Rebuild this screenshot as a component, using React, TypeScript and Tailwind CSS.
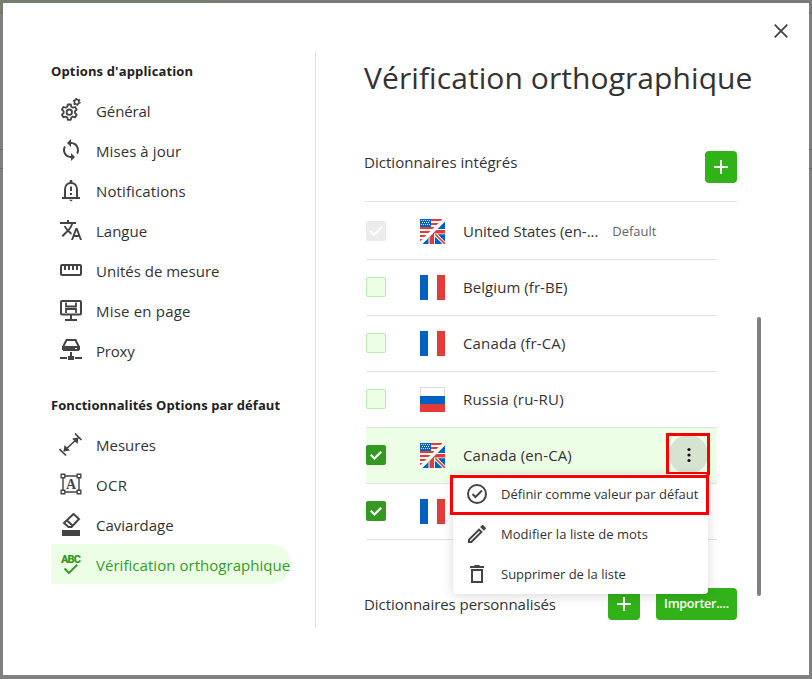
import type { ReactNode } from "react";

interface NavItemProps {
  icon: ReactNode;
  label: string;
  tracking?: string;
  active?: boolean;
}

const NavItem: React.FC<NavItemProps> = ({ icon, label, tracking = "", active }) => {
  return (
    <li
      className={`flex h-10 w-[240px] items-center pt-0.5 pl-2 whitespace-nowrap ${
        active ? "rounded-r-full bg-[#edfee6] text-[#2f9e20]" : "text-[#333]"
      }`}
    >
      <span className={`mr-[13px] h-6 w-6 shrink-0 ${active ? "text-[#349920]" : "text-[#444]"}`}>{icon}</span>
      <span className={`text-[15px] leading-5 ${tracking}`}>{label}</span>
    </li>
  );
};

const GearsIcon = () => (
  <svg viewBox="0 0 24 24" className="overflow-visible" fill="none" stroke="currentColor" strokeWidth="1.8" strokeLinejoin="round">
    <path d="M8.8 5.500h3l.5 2.300 1.600.9 2.300-.7 1.500 2.600-1.700 1.600v1.900l1.700 1.600-1.500 2.600-2.300-.7-1.600.9-.5 2.300h-3l-.5-2.300-1.600-.9-2.300.7-1.500-2.600 1.700-1.600v-1.900l-1.700-1.600 1.500-2.600 2.300.7 1.600-.9z" />
    <circle cx="10.300" cy="13.200" r="2.700" />
    <circle cx="17.700" cy="2.900" r="2.300" strokeWidth="1.500" />
    <circle cx="17.700" cy="2.900" r="3.300" strokeWidth="1.400" strokeDasharray="1.700 1.756" />
  </svg>
);

const SyncIcon = () => (
  <svg viewBox="0 1 24 24" fill="currentColor">
    <path d="M12 4V1L8 5l4 4V6c3.310 0 6 2.690 6 6 0 1.010-.25 1.970-.7 2.800l1.460 1.460C19.540 15.030 20 13.570 20 12c0-4.420-3.580-8-8-8zm0 14c-3.310 0-6-2.690-6-6 0-1.010.25-1.970.7-2.800L5.240 7.740C4.460 8.970 4 10.430 4 12c0 4.420 3.580 8 8 8v3l4-4-4-4v3z" />
  </svg>
);

const BellIcon = () => (
  <svg viewBox="0 0 24 24" fill="none" stroke="currentColor" strokeWidth="2">
    <path d="M3 19h18M6 19v-8.500c0-4 2.500-6.500 6-6.500s6 2.500 6 6.500V19" />
    <path d="M12 4V1" strokeWidth="2.600" />
    <path d="M12 7.500v4.500M12 14v2" />
    <path d="M10 20.700h4l-2 1.800z" fill="currentColor" stroke="none" />
  </svg>
);

const TranslateIcon = () => (
  <svg viewBox="0 1 24 24" fill="currentColor">
    <path d="M12.870 15.070l-2.540-2.510.03-.03c1.740-1.940 2.980-4.170 3.710-6.530H17V4h-7V2H8v2H1v1.990h11.170C11.500 7.920 10.440 9.750 9 11.350 8.070 10.320 7.300 9.190 6.690 8h-2c.73 1.630 1.730 3.170 2.980 4.560l-5.090 5.020L4 19l5-5 3.110 3.110.76-2.040zM18.500 10h-2L12 22h2l1.120-3h4.750L21 22h2l-4.500-12zm-2.620 7l1.620-4.330L19.120 17h-3.240z" />
  </svg>
);

const RulerIcon = () => (
  <svg viewBox="0 0 24 24" fill="none" stroke="currentColor" strokeWidth="2">
    <rect x="2" y="6" width="20" height="10" rx="1" />
    <path d="M6 6v5M10 6v5M14 6v5M18 6v5" />
  </svg>
);

const LayoutIcon = () => (
  <svg viewBox="0 0 24 24" fill="none" stroke="currentColor" strokeWidth="2">
    <rect x="2" y="2" width="20" height="13.500" rx="1" />
    <path d="M12 15.500V21M6 21h12" />
    <path d="M7 3.500v4h10v-4M7 14v-4h10v4" strokeWidth="1.800" />
  </svg>
);

const ProxyIcon = () => (
  <svg viewBox="0 1 24 24" fill="none" stroke="currentColor" strokeWidth="2">
    <path d="M4 9l3.500-7h9L20 9" />
    <path d="M3 8h18v3.500l-1.500 1.500h-15L3 11.500z" fill="currentColor" stroke="none" />
    <path d="M16 10.500h2" stroke="#fff" strokeWidth="1" />
    <path d="M1 20h7M16 20h7M12 14v4" />
    <path d="M9 18h6v4H9z" fill="currentColor" stroke="none" />
  </svg>
);

const MeasureIcon = () => (
  <svg viewBox="0 0 24 24" fill="none" stroke="currentColor" strokeWidth="1.700">
    <path d="M5 18L19 5M16 .5l6.500 6.500M.5 16L7 22.500" />
    <path d="M13 5.500l6.500-1-1 6.500zM11 17.500l-6.500 1 1-6.500z" fill="currentColor" stroke="none" />
  </svg>
);

const OcrIcon = () => (
  <svg viewBox="0 1 24 24" fill="none" stroke="currentColor" strokeWidth="1.400">
    <path d="M6 4h12M6 20h12M4 6v12M20 6v12" />
    <path d="M2.200 2.200h3.600v3.600H2.200zM18.200 2.200h3.600v3.600h-3.600zM2.200 18.200h3.600v3.600H2.200zM18.200 18.200h3.600v3.600h-3.600z" />
    <text x="12" y="16.500" textAnchor="middle" fontFamily="Liberation Serif, serif" fontWeight="bold" fontSize="14" fill="currentColor" stroke="none">
      A
    </text>
  </svg>
);

const EraserIcon = () => (
  <svg viewBox="0 1 24 24" fill="none" stroke="currentColor" strokeWidth="2">
    <path d="M14.500 2l5.500 5-7.500 8H9.500L5 11zM8 8.500l6 5.500" />
    <path d="M3 18h18v6H3z" fill="currentColor" stroke="none" />
  </svg>
);

const SpellIcon = () => (
  <svg viewBox="0 0 24 24" fill="none" stroke="currentColor" strokeWidth="2">
    <text x="12" y="10.200" textAnchor="middle" textLength="20" fontFamily="Roboto, sans-serif" fontWeight="900" fontSize="11" fill="currentColor" stroke="none">
      ABC
    </text>
    <path d="M5.500 15.500l4.400 4.400L18.300 11.700" />
  </svg>
);

const FranceFlag = () => (
  <svg viewBox="0 0 25 25" className="h-[25px] w-[25px]">
    <path d="M0 0h8v25H0z" fill="#0061c1" />
    <path d="M17 0h8v25h-8z" fill="#e33b38" />
  </svg>
);

const RussiaFlag = () => (
  <svg viewBox="0 0 25 25" className="h-[25px] w-[25px]">
    <path d="M.5 9V.5h24V9" fill="#fff" stroke="#d9d9d9" />
    <path d="M0 9h25v8H0z" fill="#0061c1" />
    <path d="M0 17h25v8H0z" fill="#e33b38" />
  </svg>
);

const EnglishFlag = () => (
  <svg viewBox="0 0 25 25" className="h-[25px] w-[25px]">
    <clipPath id="flag-us">
      <path d="M0 0h22.500L0 22.500z" />
    </clipPath>
    <clipPath id="flag-uk">
      <path d="M25 2.500v22.500H2.500z" />
    </clipPath>
    <g clipPath="url(#flag-us)">
      <path d="M0 0h25v25H0z" fill="#fff" />
      <path d="M0 1h25M0 5h25M0 9h25M0 13h25M0 17h25M0 21h25" stroke="#e33b38" strokeWidth="2.200" />
      <path d="M0 0h11v8H0z" fill="#0061c1" />
      <path d="M1 1.500h9M2 3.500h8M1 5.500h9" stroke="#fff" strokeDasharray="1 1" />
    </g>
    <g clipPath="url(#flag-uk)">
      <path d="M0 0h25v25H0z" fill="#0061c1" />
      <path d="M13 13l13 13" stroke="#fff" strokeWidth="3.600" />
      <path d="M13 13l13 13" stroke="#e33b38" strokeWidth="1.600" />
      <path d="M0 10h25v5.200H15V25H8.500V15.200H0z" fill="#fff" />
      <path d="M0 11h25v3.400H14V25H9.500V14.400H0z" fill="#e33b38" />
    </g>
  </svg>
);

const CheckBox = ({ state }: { state: "off" | "on" | "disabled" }) => {
  if (state === "off") {
    return <span className="-mt-px h-5 w-5 rounded-xs border border-[#bdeab0] bg-[#edfee6]" />;
  }
  return (
    <span className={`-mt-px h-5 w-5 rounded-xs ${state === "on" ? "bg-[#349920]" : "bg-[#ebebeb]"}`}>
      <svg viewBox="0 0 20 20" fill="none" stroke="#fff" strokeWidth="2.200">
        <path d={state === "on" ? "M4.800 9.800l3.700 3.700 6.700-6.700" : "M4 10l4 4 8-8"} />
      </svg>
    </span>
  );
};

interface DictionaryRowProps {
  state: "off" | "on" | "disabled";
  flag: ReactNode;
  label?: string;
  tracking?: string;
  isDefault?: boolean;
  menuOpen?: boolean;
}

const DictionaryRow: React.FC<DictionaryRowProps> = ({ state, flag, label, tracking = "", isDefault, menuOpen }) => {
  return (
    <div
      className={`relative ml-0.5 flex w-[351px] items-center border-b border-[#e3e3e3] ${
        isDefault ? "h-[58px] pt-0.5" : "h-14"
      } ${menuOpen ? "bg-[#edfee6]" : ""}`}
    >
      <CheckBox state={state} />
      <span className="ml-[34px]">{flag}</span>
      {label && <span className={`ml-[18px] text-[15px] ${tracking}`}>{label}</span>}
      {isDefault && <span className="ml-3.5 text-[13px] tracking-[-0.05px] text-[#666]">Default</span>}
      {menuOpen && (
        <div className="absolute top-[5px] right-[7px] h-[42px] w-11 overflow-hidden">
          <div className="mt-0.5 ml-[3px] flex h-[39px] w-[39px] items-center justify-center rounded-full bg-[#d6e3cf]">
            <svg viewBox="0 0 4 16" className="h-4 w-1" fill="#111">
              <circle cx="2" cy="2.500" r="1.600" />
              <circle cx="2" cy="8" r="1.600" />
              <circle cx="2" cy="13.500" r="1.600" />
            </svg>
          </div>
          <div className="absolute inset-0 border-3 border-[#fa0000]" />
        </div>
      )}
    </div>
  );
};

const PlusIcon = () => (
  <svg viewBox="0 0 14 14" className="h-3.5 w-3.5" stroke="#fff" strokeWidth="2">
    <path d="M7 0v14M0 7h14" />
  </svg>
);

const ContextMenu = () => (
  <div className="absolute top-[474px] left-[453px] h-[120px] w-[255px] rounded bg-white text-[13px] text-[#333] shadow-[0_2px_12px_rgba(0,0,0,0.15)]">
    <div className="flex h-10 items-center pl-3">
      <svg viewBox="0 0 24 24" className="h-6 w-6" fill="none" stroke="#444" strokeWidth="2">
        <circle cx="12" cy="12" r="9" />
        <path d="M7.500 12l3 3L17 8.500" />
      </svg>
      <span className="mt-0.5 ml-3 whitespace-nowrap">Définir comme valeur par défaut</span>
    </div>
    <div className="flex h-10 items-center pl-3">
      <svg viewBox="0 0 24 24" className="h-6 w-6" fill="#444">
        <path d="M14.060 9.020l.92.92L5.920 19H5v-.92l9.060-9.060M17.660 3c-.25 0-.51.1-.7.290l-1.830 1.830 3.750 3.750 1.830-1.830c.39-.39.39-1.020 0-1.410l-2.340-2.340c-.2-.2-.45-.29-.71-.29zm-3.600 3.190L3 17.250V21h3.750L17.810 9.940l-3.750-3.750z" />
      </svg>
      <span className="mt-0.5 ml-3 tracking-[0.05px]">Modifier la liste de mots</span>
    </div>
    <div className="flex h-10 items-center pl-3">
      <svg viewBox="0 0 24 24" className="h-6 w-6" fill="none" stroke="#444" strokeWidth="2">
        <path d="M7 8h10v12H7zM5 5h14M9.500 4h5" />
      </svg>
      <span className="mt-0.5 ml-3">Supprimer de la liste</span>
    </div>
    <div className="absolute top-px -left-[3px] h-10 w-[259px] border-3 border-[#fa0000]" />
  </div>
);

const App = () => {
  return (
    <div className="relative h-[679px] w-[812px] bg-[#808080] px-[3px] pt-[3px] font-['Open_Sans','Noto_Sans',sans-serif] text-[#333]">
      <div className="absolute inset-0">
        <div className="h-3.5 border-b-2 border-[#727272] bg-[#7b7b7b]">
          <div className="h-3 w-[214px] bg-[#747f6d]" />
        </div>
        <div className="mt-[135px] h-5 border-y border-[#686868]" />
      </div>
      <div className="relative flex h-[672px] w-[806px] bg-white">
        <nav className="mt-12 ml-12 h-[577px] w-[265px] border-r border-[#e3e3e3]">
          <h2 className="pt-[11px] text-[13px] leading-[18px] font-bold tracking-[0.14px] text-[#222]">Options d'application</h2>
          <ul className="mt-2.5">
            <NavItem icon={<GearsIcon />} label="Général" tracking="tracking-[-0.1px]" />
            <NavItem icon={<SyncIcon />} label="Mises à jour" tracking="tracking-[0.08px]" />
            <NavItem icon={<BellIcon />} label="Notifications" tracking="tracking-[0.12px]" />
            <NavItem icon={<TranslateIcon />} label="Langue" />
            <NavItem icon={<RulerIcon />} label="Unités de mesure" />
            <NavItem icon={<LayoutIcon />} label="Mise en page" tracking="tracking-[0.2px]" />
            <NavItem icon={<ProxyIcon />} label="Proxy" tracking="tracking-[-0.2px]" />
          </ul>
          <h2 className="mt-[26px] text-[13px] leading-[18px] font-bold tracking-[0.06px] text-[#222]">
            Fonctionnalités Options par défaut
          </h2>
          <ul className="mt-2.5">
            <NavItem icon={<MeasureIcon />} label="Mesures" />
            <NavItem icon={<OcrIcon />} label="OCR" tracking="tracking-[0.3px]" />
            <NavItem icon={<EraserIcon />} label="Caviardage" />
            <NavItem icon={<SpellIcon />} label="Vérification orthographique" tracking="tracking-[0.04px]" active />
          </ul>
        </nav>
        <main className="ml-12 w-[373px] pt-[51px] whitespace-nowrap">
          <h1 className="text-[30px] leading-[48px] tracking-[0.08px]">Vérification orthographique</h1>
          <div className="mt-[49px] flex h-[51px] items-start justify-between border-b border-[#e3e3e3]">
            <span className="mt-px text-[15px] leading-5 tracking-[0.03px]">Dictionnaires intégrés</span>
            <button className="flex h-8 w-8 items-center justify-center rounded-sm bg-[#32b219]">
              <PlusIcon />
            </button>
          </div>
          <DictionaryRow state="disabled" flag={<EnglishFlag />} label="United States (en-..." tracking="tracking-[-0.04px]" isDefault />
          <DictionaryRow state="off" flag={<FranceFlag />} label="Belgium (fr-BE)" tracking="tracking-[0.06px]" />
          <DictionaryRow state="off" flag={<FranceFlag />} label="Canada (fr-CA)" tracking="tracking-[0.14px]" />
          <DictionaryRow state="off" flag={<RussiaFlag />} label="Russia (ru-RU)" tracking="tracking-[0.2px]" />
          <DictionaryRow state="on" flag={<EnglishFlag />} label="Canada (en-CA)" tracking="tracking-[0.14px]" menuOpen />
          <DictionaryRow state="on" flag={<FranceFlag />} />
          <div className="mt-12 flex h-8 items-center">
            <span className="text-[15px] tracking-[-0.04px]">Dictionnaires personnalisés</span>
            <button className="ml-auto flex h-8 w-8 items-center justify-center rounded-sm bg-[#32b219]">
              <PlusIcon />
            </button>
            <button className="ml-4 h-8 w-[81px] rounded-sm bg-[#32b219] pt-px text-[12.5px] font-semibold tracking-[-0.25px] text-white">
              Importer....
            </button>
          </div>
        </main>
        <div className="flex flex-col items-center">
          <svg viewBox="0 0 14 14" className="mt-[21px] ml-[37px] h-3.5 w-3.5" stroke="#444" strokeWidth="1.800">
            <path d="M.7.7l12.600 12.600M13.300.7L.7 13.300" />
          </svg>
          <div className="mt-[279px] mr-auto ml-5 h-[279px] w-1 rounded-full bg-[#808080]" />
        </div>
      </div>
      <ContextMenu />
    </div>
  );
};

export default App;
